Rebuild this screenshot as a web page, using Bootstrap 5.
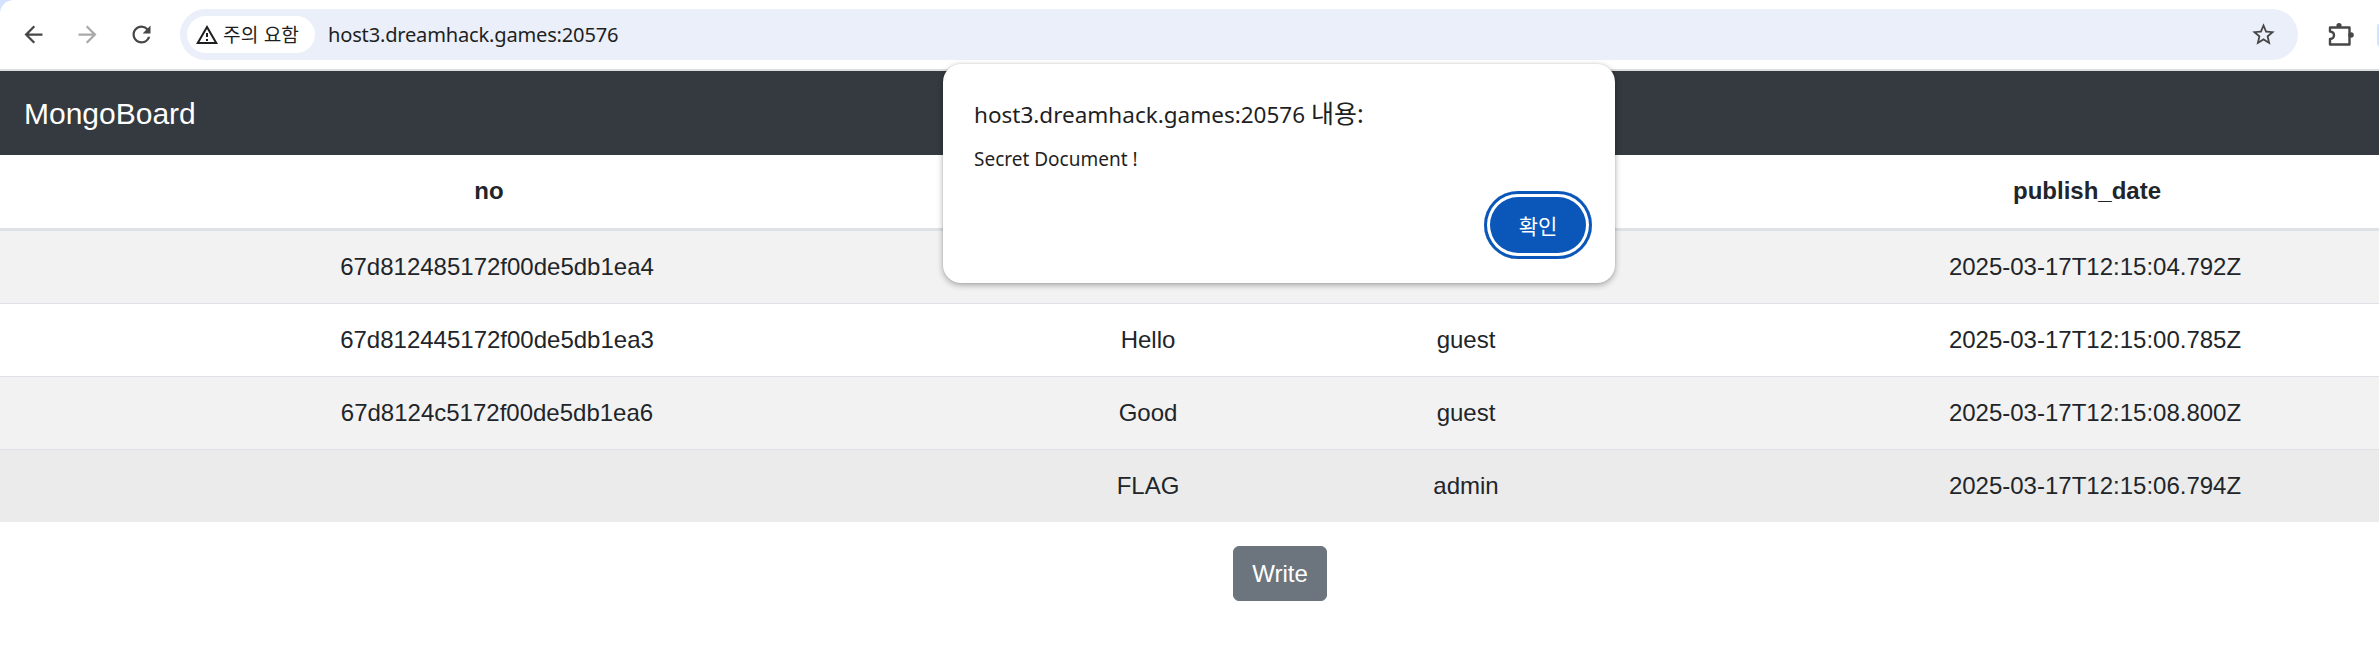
<!DOCTYPE html>
<html lang="ko">
<head>
  <meta charset="UTF-8">
  <meta name="viewport" content="width=device-width, initial-scale=1.0">
  <title>MongoBoard</title>
  <link href="https://cdn.jsdelivr.net/npm/bootstrap@5.3.0/dist/css/bootstrap.min.css" rel="stylesheet">
  <style>
    html, body {
      overflow: hidden;
    }
    body {
      width: 2379px;
      height: 666px;
      background: #fff;
      font-family: "Liberation Sans", Arial, sans-serif;
      font-size: 24px;
      line-height: 36px;
      color: #212529;
    }
    .page-frame {
      position: relative;
      width: 2560px;
      height: 666px;
    }
    .browser-top {
      height: 71px;
      background: #d3e3fd;
    }
    .browser-bar {
      height: 71px;
      padding-left: 6px;
      background: #fff;
      border-bottom: 2px solid #dcdee0;
      border-top-left-radius: 14px;
      font-family: "Noto Sans", "Noto Sans CJK KR", sans-serif;
    }
    .tool-btn {
      width: 54px;
      height: 54px;
      flex: none;
      color: #474747;
    }
    .tool-btn.is-off {
      color: #a9a9a9;
    }
    .tool-btn svg {
      display: block;
      fill: currentColor;
    }
    .omnibox {
      width: 2118px;
      height: 51px;
      flex: none;
      margin-left: 12px;
      padding: 0 21px 0 7px;
      background: #ebeff9;
      border-radius: 26px;
    }
    .warn-chip {
      height: 37px;
      width: 128px;
      padding-left: 8px;
      gap: 4px;
      background: #fff;
      border-radius: 19px;
      color: #1f1f1f;
      font-family: "Noto Sans CJK KR", sans-serif;
      font-size: 19.2px;
      line-height: 37px;
    }
    .warn-chip svg {
      fill: #1f1f1f;
      flex: none;
    }
    .omni-url {
      margin-left: 13px;
      color: #1f1f1f;
      font-size: 20.1px;
      letter-spacing: -0.2px;
    }
    .omni-star {
      fill: #474747;
      display: block;
    }
    .ext-btn {
      margin-left: 15px;
    }
    .avatar-edge {
      width: 54px;
      height: 24px;
      margin-left: 10px;
      flex: none;
      background: #d3e3fd;
      border-radius: 4px;
    }
    .board-nav {
      height: 84px;
      padding: 0 24px;
      background: #343a40;
    }
    .board-nav .navbar-brand {
      margin: 0;
      padding: 0;
      font-size: 30px;
      line-height: 45px;
      color: #fff;
    }
    .board-table {
      width: 2560px;
      table-layout: fixed;
      margin-bottom: 24px;
      font-size: 24px;
      line-height: 36px;
    }
    .col-no { width: 978px; }
    .col-title { width: 340px; }
    .col-author { width: 296px; }
    .col-date { width: 946px; }
    .board-table th {
      padding: 18px 18px 19px;
      border-bottom: 3px solid #dee2e6;
    }
    .board-table td {
      padding: 18px;
      border-bottom: 1px solid #dee2e6;
    }
    .board-table td.cell-shift {
      padding-left: 34px;
    }
    .board-table tr:last-child td {
      border-bottom: 0;
    }
    .board-table .row-hover td {
      --bs-table-accent-bg: transparent;
      background: #ebebeb;
    }
    .write-btn {
      padding: 8.5px 18px;
      font-size: 24px;
      line-height: 36px;
      border-width: 1.5px;
      border-radius: 6px;
    }
    .alert-box {
      position: absolute;
      left: 943px;
      top: 64px;
      width: 672px;
      height: 219px;
      padding: 31px;
      background: #fff;
      border-radius: 18px;
      box-shadow: 0 2px 6px rgba(0, 0, 0, .32), 0 0 2px rgba(0, 0, 0, .12);
      font-family: "Noto Sans", "Noto Sans CJK KR", sans-serif;
      color: #1f1f1f;
    }
    .alert-origin {
      font-size: 22.5px;
      line-height: 36px;
    }
    .alert-origin span {
      font-size: 25px;
    }
    .alert-text {
      margin-top: 13px;
      font-size: 19px;
      line-height: 26px;
    }
    .alert-ok {
      position: absolute;
      right: 23px;
      top: 127px;
      width: 108px;
      height: 68px;
      padding: 0;
      background: #0b57b9;
      border: 0;
      border-radius: 34px;
      box-shadow: inset 0 0 0 3px #0b57b9, inset 0 0 0 6px #fff;
      color: #fff;
      font-family: "Noto Sans CJK KR", sans-serif;
      font-size: 21px;
    }
  </style>
</head>
<body>
  <div class="page-frame">
    <div class="browser-top">
      <div class="browser-bar d-flex align-items-center">
        <div class="tool-btn d-flex align-items-center justify-content-center">
          <svg width="27" height="27" viewBox="0 0 24 24"><path d="M20 11H7.83l5.59-5.59L12 4l-8 8 8 8 1.41-1.41L7.83 13H20v-2z"/></svg>
        </div>
        <div class="tool-btn is-off d-flex align-items-center justify-content-center">
          <svg width="27" height="27" viewBox="0 0 24 24"><path d="M12 4l-1.41 1.41L16.17 11H4v2h12.17l-5.58 5.59L12 20l8-8z"/></svg>
        </div>
        <div class="tool-btn d-flex align-items-center justify-content-center">
          <svg width="27" height="27" viewBox="0 0 24 24"><path d="M17.65 6.35A7.958 7.958 0 0 0 12 4c-4.42 0-7.99 3.58-7.99 8s3.57 8 7.99 8c3.73 0 6.84-2.55 7.73-6h-2.08A5.99 5.99 0 0 1 12 18c-3.31 0-6-2.69-6-6s2.69-6 6-6c1.66 0 3.14.69 4.22 1.78L13 11h7V4l-2.35 2.35z"/></svg>
        </div>
        <div class="omnibox d-flex align-items-center">
          <div class="warn-chip d-flex align-items-center">
            <svg width="24" height="24" viewBox="0 0 24 24"><path d="M12 5.99L19.53 19H4.47L12 5.99M12 2L1 21h22L12 2zm1 14h-2v2h2v-2zm0-6h-2v4h2v-4z"/></svg>
            <span>주의 요함</span>
          </div>
          <span class="omni-url">host3.dreamhack.games:20576</span>
          <svg class="omni-star ms-auto" width="27" height="27" viewBox="0 0 24 24"><path d="M22 9.24l-7.19-.62L12 2 9.19 8.63 2 9.24l5.46 4.73L5.82 21 12 17.27 18.18 21l-1.63-7.03L22 9.24zM12 15.4l-3.76 2.27 1-4.28-3.32-2.88 4.38-.38L12 6.1l1.71 4.04 4.38.38-3.32 2.88 1 4.28L12 15.4z"/></svg>
        </div>
        <div class="tool-btn ext-btn d-flex align-items-center justify-content-center">
          <svg width="28" height="28" viewBox="0 0 28 28">
            <circle cx="13" cy="4.5" r="2.6"/>
            <circle cx="25" cy="14" r="2.8"/>
            <path d="M4 6.5h19.5v17H4V18c3 0 4-2 4-3.7S7 10.6 4 10.6z" fill="none" stroke="#474747" stroke-width="2.4" stroke-linejoin="round"/>
          </svg>
        </div>
        <div class="avatar-edge"></div>
      </div>
    </div>

    <nav class="navbar board-nav">
      <a class="navbar-brand" href="#">MongoBoard</a>
    </nav>

    <table class="table table-striped text-center board-table">
      <colgroup>
        <col class="col-no">
        <col class="col-title">
        <col class="col-author">
        <col class="col-date">
      </colgroup>
      <thead>
        <tr><th>no</th><th>title</th><th>author</th><th>publish_date</th></tr>
      </thead>
      <tbody>
        <tr><td class="cell-shift">67d812485172f00de5db1ea4</td><td>Hi</td><td>guest</td><td class="cell-shift">2025-03-17T12:15:04.792Z</td></tr>
        <tr><td class="cell-shift">67d812445172f00de5db1ea3</td><td>Hello</td><td>guest</td><td class="cell-shift">2025-03-17T12:15:00.785Z</td></tr>
        <tr><td class="cell-shift">67d8124c5172f00de5db1ea6</td><td>Good</td><td>guest</td><td class="cell-shift">2025-03-17T12:15:08.800Z</td></tr>
        <tr class="row-hover"><td></td><td>FLAG</td><td>admin</td><td class="cell-shift">2025-03-17T12:15:06.794Z</td></tr>
      </tbody>
    </table>

    <div class="d-flex justify-content-center">
      <a class="btn btn-secondary write-btn" href="#">Write</a>
    </div>

    <div class="alert-box">
      <div class="alert-origin">host3.dreamhack.games:20576 <span>내용:</span></div>
      <div class="alert-text">Secret Document !</div>
      <button type="button" class="alert-ok">확인</button>
    </div>
  </div>
</body>
</html>
